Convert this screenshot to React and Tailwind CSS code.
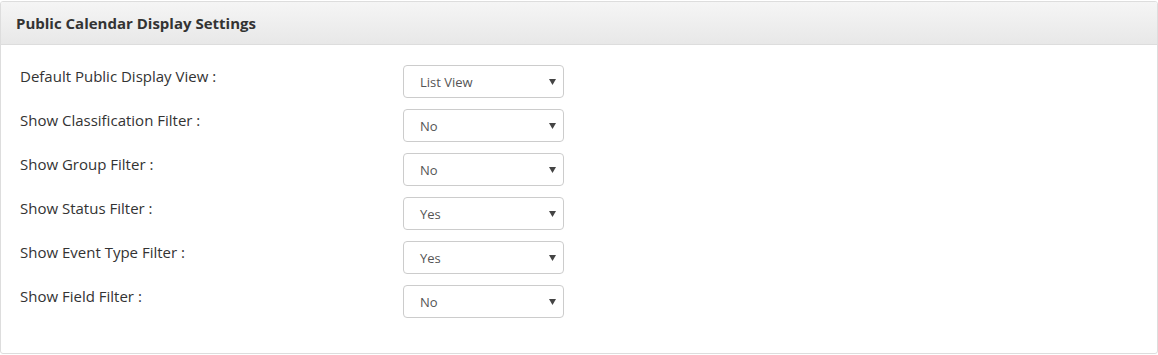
const rows = [
  { label: "Default Public Display View :", value: "List View" },
  { label: "Show Classification Filter :", value: "No" },
  { label: "Show Group Filter :", value: "No" },
  { label: "Show Status Filter :", value: "Yes" },
  { label: "Show Event Type Filter :", value: "Yes" },
  { label: "Show Field Filter :", value: "No" },
];

function FakeSelect({ value }) {
  return (
    <div className="flex h-[33px] w-[161px] items-center justify-between rounded-[4px] border border-[#cccccc] bg-white pl-[16px] pr-[7px] text-[13px] text-[#555555]">
      <span className="pt-[3px]">{value}</span>
      <svg width="7" height="6" viewBox="0 0 7 6" aria-hidden>
        <path d="M0 0h7L3.5 6z" fill="#444" />
      </svg>
    </div>
  );
}

export default function App() {
  return (
    <div className="bg-white pt-px font-['Open_Sans',sans-serif]">
      <div className="w-[1158px] overflow-hidden rounded-[3px] border border-[#dddddd]">
        <div className="flex h-[43px] items-center border-b border-[#dddddd] bg-gradient-to-b from-[#f5f5f5] to-[#e8e8e8] px-[15px]">
          <h3 className="text-[15px] font-bold text-[#333333]">
            Public Calendar Display Settings
          </h3>
        </div>
        <div className="flex flex-col gap-[11px] px-[19px] pb-[35px] pt-5">
          {rows.map((r) => (
            <div key={r.label} className="flex items-start">
              <label className="w-[383px] pt-[1px] text-[15px] leading-5 text-[#333333]">
                {r.label}
              </label>
              <FakeSelect value={r.value} />
            </div>
          ))}
        </div>
      </div>
    </div>
  );
}
